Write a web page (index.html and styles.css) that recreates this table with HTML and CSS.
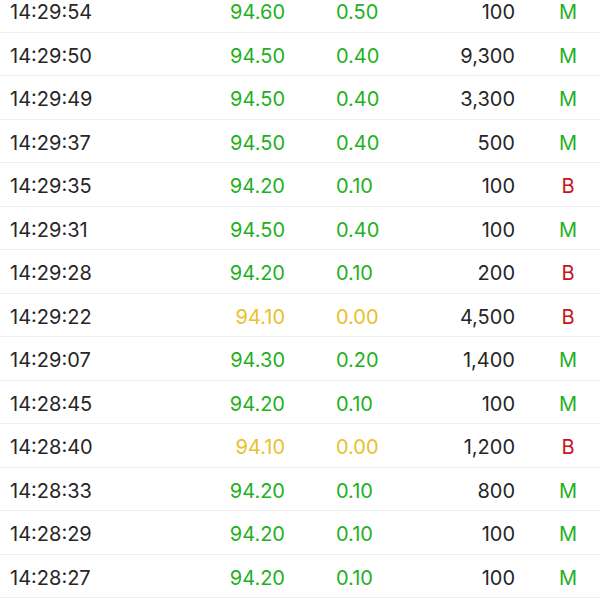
FILE: index.html
```html
<!DOCTYPE html>
<html>
<head>
<meta charset="utf-8">
<link rel="stylesheet" href="styles.css">
</head>
<body>
<div class="trades">
  <div class="row"><span class="time">14:29:54</span><span class="price up">94.60</span><span class="chg up">0.50</span><span class="vol">100</span><span class="side m">M</span></div>
  <div class="row"><span class="time">14:29:50</span><span class="price up">94.50</span><span class="chg up">0.40</span><span class="vol">9,300</span><span class="side m">M</span></div>
  <div class="row"><span class="time">14:29:49</span><span class="price up">94.50</span><span class="chg up">0.40</span><span class="vol">3,300</span><span class="side m">M</span></div>
  <div class="row"><span class="time">14:29:37</span><span class="price up">94.50</span><span class="chg up">0.40</span><span class="vol">500</span><span class="side m">M</span></div>
  <div class="row"><span class="time">14:29:35</span><span class="price up">94.20</span><span class="chg up">0.10</span><span class="vol">100</span><span class="side b">B</span></div>
  <div class="row"><span class="time">14:29:31</span><span class="price up">94.50</span><span class="chg up">0.40</span><span class="vol">100</span><span class="side m">M</span></div>
  <div class="row"><span class="time">14:29:28</span><span class="price up">94.20</span><span class="chg up">0.10</span><span class="vol">200</span><span class="side b">B</span></div>
  <div class="row"><span class="time">14:29:22</span><span class="price flat">94.10</span><span class="chg flat">0.00</span><span class="vol">4,500</span><span class="side b">B</span></div>
  <div class="row"><span class="time">14:29:07</span><span class="price up">94.30</span><span class="chg up">0.20</span><span class="vol">1,400</span><span class="side m">M</span></div>
  <div class="row"><span class="time">14:28:45</span><span class="price up">94.20</span><span class="chg up">0.10</span><span class="vol">100</span><span class="side m">M</span></div>
  <div class="row"><span class="time">14:28:40</span><span class="price flat">94.10</span><span class="chg flat">0.00</span><span class="vol">1,200</span><span class="side b">B</span></div>
  <div class="row"><span class="time">14:28:33</span><span class="price up">94.20</span><span class="chg up">0.10</span><span class="vol">800</span><span class="side m">M</span></div>
  <div class="row"><span class="time">14:28:29</span><span class="price up">94.20</span><span class="chg up">0.10</span><span class="vol">100</span><span class="side m">M</span></div>
  <div class="row"><span class="time">14:28:27</span><span class="price up">94.20</span><span class="chg up">0.10</span><span class="vol">100</span><span class="side m">M</span></div>
</div>
</body>
</html>
```
FILE: styles.css
```css
html, body {
  margin: 0;
  padding: 0;
  background: #ffffff;
  overflow: hidden;
}
body {
  font-family: "Inter", "Noto Sans", sans-serif;
  font-size: 20px;
  color: #262626;
}
.trades {
  margin-top: -11px;
}
.row {
  display: grid;
  grid-template-columns: 140px 135px 131px 99px 85px;
  padding-left: 10px;
  padding-top: 4px;
  height: 43.5px;
  box-sizing: border-box;
  align-items: center;
  border-bottom: 1px solid #efefef;
  line-height: 1;
}
.price { text-align: right; }
.chg { padding-left: 51px; }
.vol { text-align: right; }
.side { padding-left: 21px; text-align: center; }
.up { color: #1fb01f; }
.flat { color: #e8c12c; }
.m { color: #1fb01f; }
.b { color: #c4161c; }
```
